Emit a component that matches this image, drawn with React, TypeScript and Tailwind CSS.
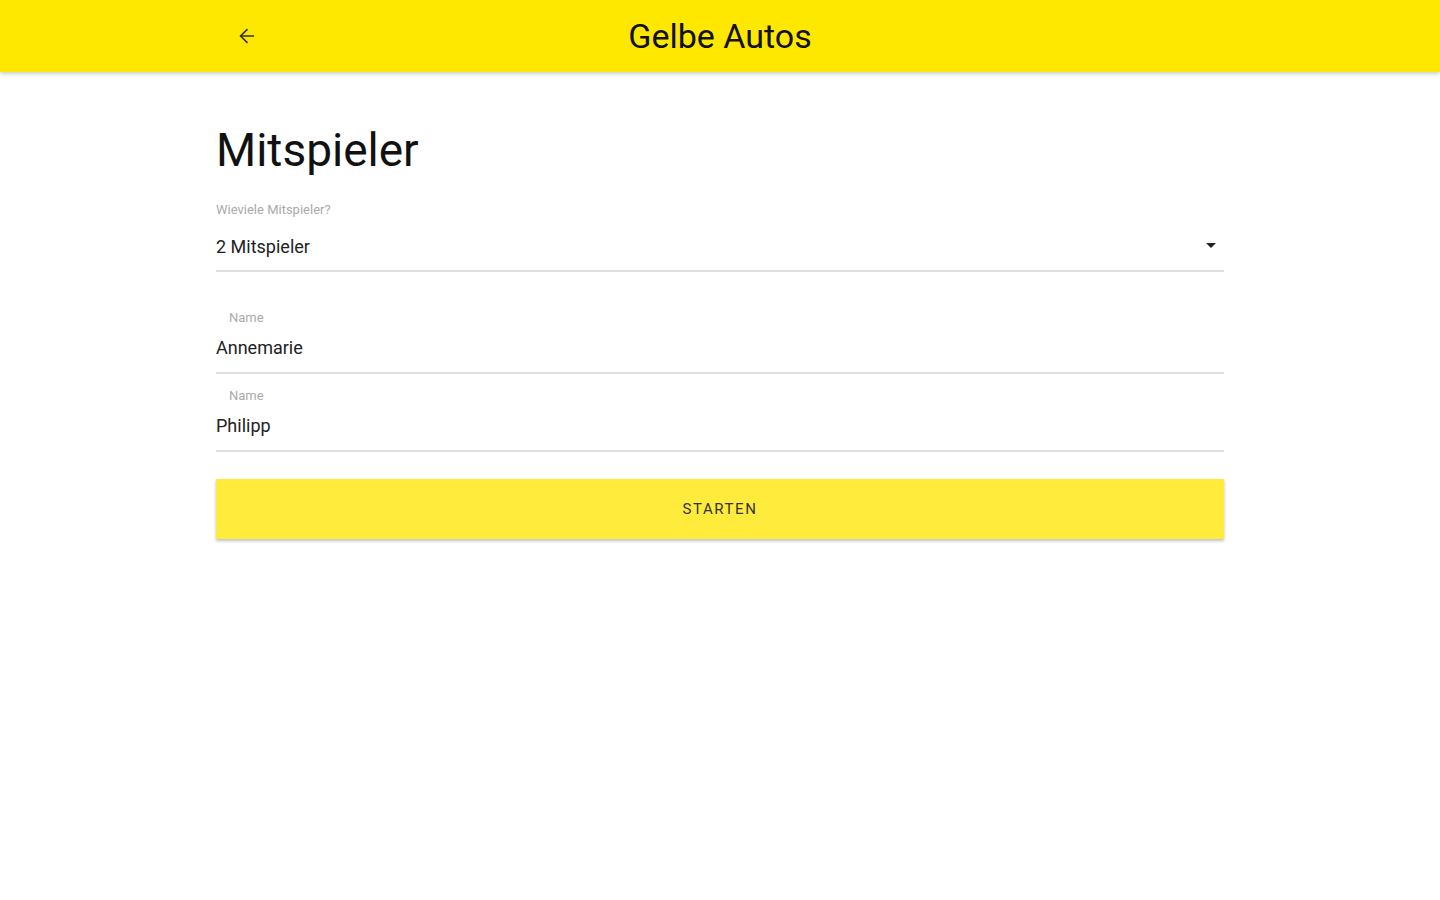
import { ArrowLeft } from "lucide-react";

export default function App() {
  return (
    <div className="min-h-screen bg-white font-['Roboto',sans-serif] text-[#1a1a1a]">
      <header className="h-[72px] bg-[#ffe800] shadow-[0_2px_4px_rgba(0,0,0,0.2)] flex items-center relative">
        <button className="absolute left-[236px] top-[25px] text-[#333]">
          <ArrowLeft className="w-[22px] h-[22px]" strokeWidth={1.8} />
        </button>
        <h1 className="w-full text-center text-[34px] leading-none text-[#111]">Gelbe Autos</h1>
      </header>

      <main className="w-[1008px] ml-[216px] pt-[50px]">
        <h2 className="text-[46px] leading-[56px] text-[#111] mb-[24px]">Mitspieler</h2>

        <div className="border-b-2 border-[#e0e0e0]">
          <label className="block text-[13px] leading-[16px] text-[#aaa]">Wieviele Mitspieler?</label>
          <div className="flex items-center justify-between h-[52px] pt-[4px]">
            <span className="text-[18px] text-[#222]">2 Mitspieler</span>
            <svg width="10" height="6" viewBox="0 0 10 6" className="mr-[8px]">
              <path d="M0 0h10L5 5z" fill="#222" />
            </svg>
          </div>
        </div>

        <div className="mt-[38px] border-b-2 border-[#e0e0e0] pb-[14px]">
          <label className="block pl-[13px] text-[13px] leading-[16px] text-[#aaa]">Name</label>
          <div className="text-[18px] leading-[20px] mt-[12px] text-[#222]">Annemarie</div>
        </div>

        <div className="mt-[14px] border-b-2 border-[#e0e0e0] pb-[14px]">
          <label className="block pl-[13px] text-[13px] leading-[16px] text-[#aaa]">Name</label>
          <div className="text-[18px] leading-[20px] mt-[12px] text-[#222]">Philipp</div>
        </div>

        <button className="mt-[27px] w-full h-[60px] bg-[#ffeb3b] shadow-[0_2px_3px_rgba(0,0,0,0.25)] text-[15px] tracking-[1.6px] text-[#333] uppercase">
          Starten
        </button>
      </main>
    </div>
  );
}
